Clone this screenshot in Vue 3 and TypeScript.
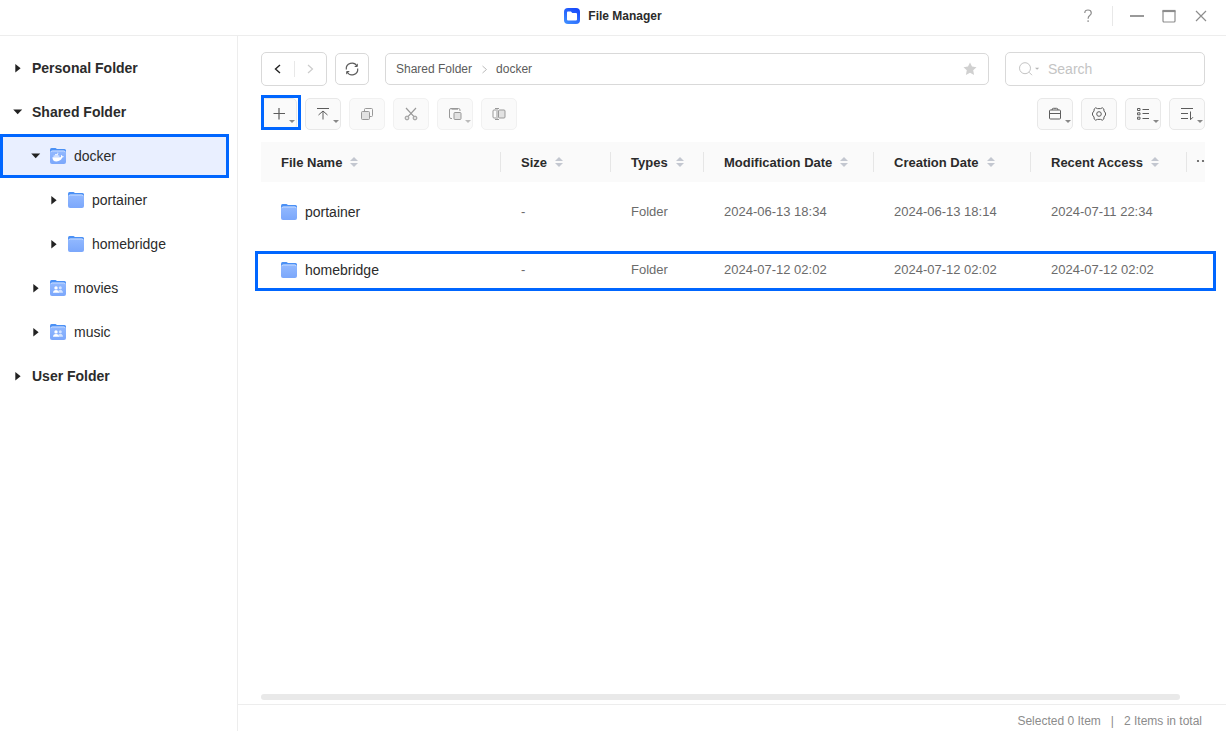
<script setup lang="ts">
import { ref } from 'vue'

type Glyph = 'plain' | 'docker' | 'people'

interface TreeNode {
  label: string
  level: 0 | 1 | 2
  open?: boolean
  icon?: Glyph
  selected?: boolean
}

interface Column {
  key: string
  label: string
}

interface FileRow {
  name: string
  size: string
  type: string
  modified: string
  created: string
  accessed: string
  marked?: boolean
}

const tree: TreeNode[] = [
  { label: 'Personal Folder', level: 0 },
  { label: 'Shared Folder', level: 0, open: true },
  { label: 'docker', level: 1, open: true, icon: 'docker', selected: true },
  { label: 'portainer', level: 2, icon: 'plain' },
  { label: 'homebridge', level: 2, icon: 'plain' },
  { label: 'movies', level: 1, icon: 'people' },
  { label: 'music', level: 1, icon: 'people' },
  { label: 'User Folder', level: 0 },
]

const columns: Column[] = [
  { key: 'name', label: 'File Name' },
  { key: 'size', label: 'Size' },
  { key: 'type', label: 'Types' },
  { key: 'modified', label: 'Modification Date' },
  { key: 'created', label: 'Creation Date' },
  { key: 'accessed', label: 'Recent Access' },
]

const files: FileRow[] = [
  {
    name: 'portainer',
    size: '-',
    type: 'Folder',
    modified: '2024-06-13 18:34',
    created: '2024-06-13 18:14',
    accessed: '2024-07-11 22:34',
  },
  {
    name: 'homebridge',
    size: '-',
    type: 'Folder',
    modified: '2024-07-12 02:02',
    created: '2024-07-12 02:02',
    accessed: '2024-07-12 02:02',
    marked: true,
  },
]

const query = ref('')
</script>

<template>
  <div class="window">
    <svg class="defs" aria-hidden="true">
      <defs>
        <linearGradient id="folder-front" x1="0" y1="0" x2="0" y2="1">
          <stop offset="0" stop-color="#92b9ff" />
          <stop offset="1" stop-color="#7ba7fb" />
        </linearGradient>
        <linearGradient id="app-bg" x1="0.8" y1="0" x2="0.2" y2="1">
          <stop offset="0" stop-color="#1546fb" />
          <stop offset="1" stop-color="#3f8dff" />
        </linearGradient>
      </defs>
      <symbol id="i-plain" viewBox="0 0 16 16">
        <path d="M0 2Q0 0 1.500 0H5.500L7 1H14.500Q16 1 16 2.500V8H0z" fill="#4a90f5" />
        <path d="M0 4.500Q0 2.500 2 2.500H14Q16 2.500 16 4.500V14Q16 16 14 16H2Q0 16 0 14z" fill="url(#folder-front)" />
        <path d="M1 4.200Q1.200 3 2.400 3H13.600Q14.800 3 15 4.200" fill="none" stroke="#cfe1ff" stroke-width="0.900" />
      </symbol>
      <symbol id="i-docker" viewBox="0 0 16 16">
        <use href="#i-plain" />
        <path d="M2.400 9.200H10.500Q11.400 8.800 10.900 7.400L11.500 7Q12.300 7.500 12.400 8.300Q13.300 8.100 14 8.600Q13.400 9.600 12.200 9.600Q10.900 13.400 6.500 13.400Q2.400 13.400 2.400 9.200z" fill="#fff" />
        <path d="M3.500 7.400h5.900v1.400H3.500zM5 6h3v1.200H5zM7 4.800h1.400v1H7z" fill="#e3edff" />
      </symbol>
      <symbol id="i-people" viewBox="0 0 16 16">
        <use href="#i-plain" />
        <g fill="#d3e3ff">
          <circle cx="10.300" cy="7.700" r="1.500" />
          <path d="M8.500 12.800V10.500Q10 9.300 11.500 9.900Q13 10.700 13 12.800z" />
        </g>
        <g fill="#fff">
          <circle cx="6" cy="7.900" r="1.700" />
          <path d="M3 12.800Q3 9.900 6 9.900T9 12.800z" />
        </g>
      </symbol>
    </svg>

    <header class="titlebar">
      <div class="app-title">
        <svg width="16" height="16" viewBox="0 0 16 16" aria-hidden="true">
          <rect width="16" height="16" rx="4" fill="url(#app-bg)" />
          <path d="M3 4.500Q3 3.600 3.900 3.600H6.900L8.300 5H12Q13 5 13 6V11.400Q13 12.400 12 12.400H4Q3 12.400 3 11.400z" fill="#fff" />
        </svg>
        <h1>File Manager</h1>
      </div>
      <div class="window-controls">
        <button type="button" class="bare" aria-label="Help">
          <svg width="16" height="16" viewBox="0 0 16 16" class="line grey thick">
            <path d="M4.800 5Q4.800 2 8 2T11.300 4.900Q11.300 6.300 9.700 7.400T8.100 10.700" />
            <path d="M8.100 12.300v1.700" />
          </svg>
        </button>
        <span class="bar"></span>
        <button type="button" class="bare" aria-label="Minimize">
          <svg width="16" height="16" viewBox="0 0 16 16"><path d="M1 8h14" fill="none" stroke="#999" stroke-width="2" /></svg>
        </button>
        <button type="button" class="bare" aria-label="Maximize">
          <svg width="16" height="16" viewBox="0 0 16 16" fill="none" stroke="#8d8d8d">
            <rect x="2" y="2.500" width="12" height="11.500" rx="1" stroke-width="1.200" /><path d="M1.500 3h13" stroke-width="2.200" />
          </svg>
        </button>
        <button type="button" class="bare" aria-label="Close">
          <svg width="16" height="16" viewBox="0 0 16 16" class="line grey thick"><path d="M3 3l10 10M13 3L3 13" /></svg>
        </button>
      </div>
    </header>

    <div class="body">
      <nav class="sidebar" aria-label="Folders">
        <ul>
          <li v-for="node in tree" :key="node.label">
            <button type="button" class="node" :class="['level-' + node.level, { selected: node.selected }]" :aria-expanded="!!node.open">
              <svg class="arrow" width="8" height="10" viewBox="0 0 8 10" aria-hidden="true">
                <path v-if="node.open" d="M-0.800 2.500h9L3.700 7.300z" />
                <path v-else d="M1.300 1v8.400L6.600 5.200z" />
              </svg>
              <svg v-if="node.icon" class="folder" width="16" height="16" aria-hidden="true"><use :href="'#i-' + node.icon" /></svg>
              <span>{{ node.label }}</span>
            </button>
          </li>
        </ul>
      </nav>

      <main class="main">
        <div class="content">
          <div class="location">
            <div class="history">
              <button type="button" aria-label="Back">
                <svg width="16" height="16" viewBox="0 0 16 16" fill="none" stroke="#222" stroke-width="1.400"><path d="M10 4L5.500 8L10 12" /></svg>
              </button>
              <span class="bar"></span>
              <button type="button" aria-label="Forward" disabled>
                <svg width="16" height="16" viewBox="0 0 16 16" fill="none" stroke="#ccc" stroke-width="1.200"><path d="M6 4L10.500 8L6 12" /></svg>
              </button>
            </div>
            <button type="button" class="refresh" aria-label="Refresh">
              <svg width="16" height="16" viewBox="0 0 16 16" class="line">
                <path d="M2.300 8.500A5.700 5.700 0 0 1 13 5.200M13.700 7.500A5.700 5.700 0 0 1 3 10.800" stroke-width="1.200" />
                <path d="M13.300 2.800V5.500H10.700M2.700 13.200V10.500H5.300" />
              </svg>
            </button>
            <div class="path">
              <a href="#shared">Shared Folder</a>
              <svg width="8" height="10" viewBox="0 0 8 10" fill="none" stroke="#bbb"><path d="M2.500 2L6.500 5.500L2.500 9" /></svg>
              <a href="#docker">docker</a>
              <button type="button" class="bare star" aria-label="Add to favorites">
                <svg width="16" height="16" viewBox="0 0 16 16"><path d="M8 1.500l2 4 4.500.7-3.300 3.100.9 4.600L8 11.700l-4.100 2.200.9-4.600-3.300-3.100L6 5.500z" fill="#d0d0d0" /></svg>
              </button>
            </div>
            <div class="search">
              <button type="button" class="bare" aria-label="Search options">
                <svg width="24" height="16" viewBox="0 0 24 16">
                  <g fill="none" stroke="#c4c4c4"><circle cx="7" cy="7.200" r="5.500" /><path d="M11 11.200l3 3" /></g>
                  <path d="M17 6.800h4.200l-2.100 2z" fill="#b5b5b5" />
                </svg>
              </button>
              <input v-model="query" type="text" placeholder="Search" aria-label="Search" />
            </div>
          </div>

          <div class="toolbar">
            <button type="button" class="tool callout" aria-label="New">
              <svg width="16" height="16" viewBox="0 0 16 16" class="line"><path d="M2.500 7.500h11.500M8 2v11.500" stroke-width="1.200" /></svg>
              <span class="caret"></span>
            </button>
            <button type="button" class="tool" aria-label="Upload">
              <svg width="16" height="16" viewBox="0 0 16 16" class="line"><path d="M2 2.500h12M8 13.500V5M3.500 9L8 5l4.500 4" /></svg>
              <span class="caret"></span>
            </button>
            <button type="button" class="tool off" aria-label="Copy" disabled>
              <svg width="16" height="16" viewBox="0 0 16 16" class="line">
                <rect x="2.500" y="5.500" width="8" height="8" rx="1" fill="#e2e2e2" /><path d="M5.500 5.500V3.500Q5.500 2.500 6.500 2.500H12.500Q13.500 2.500 13.500 3.500V9.500Q13.500 10.500 12.500 10.500H10.500" />
              </svg>
            </button>
            <button type="button" class="tool off" aria-label="Cut" disabled>
              <svg width="16" height="16" viewBox="0 0 16 16" class="line">
                <path d="M3 2L11 10.700M13 2L5 10.700" stroke-width="1.200" /><circle cx="4" cy="12" r="1.900" fill="#e2e2e2" /><circle cx="12" cy="12" r="1.900" fill="#e2e2e2" />
              </svg>
            </button>
            <button type="button" class="tool off" aria-label="Paste" disabled>
              <svg width="16" height="16" viewBox="0 0 16 16" class="line">
                <path d="M5 12.500H4Q2.500 12.500 2.500 11V4Q2.500 2.500 4 2.500H11.500Q13 2.500 13 4V5M4.500 3.200h6.500" /><rect x="7" y="6.500" width="7" height="7" rx="1" fill="#e2e2e2" />
              </svg>
              <span class="caret"></span>
            </button>
            <button type="button" class="tool off" aria-label="Rename" disabled>
              <svg width="16" height="16" viewBox="0 0 16 16" class="line">
                <rect x="7.500" y="4" width="6.500" height="8" rx="1" fill="#e2e2e2" /><path d="M5 4H3Q2 4 2 5V11Q2 12 3 12H5M4 2.500H8M4 13.500H8M6 2.500V13.500" />
              </svg>
            </button>
            <span class="spacer"></span>
            <button type="button" class="tool" aria-label="Tools">
              <svg width="16" height="16" viewBox="0 0 16 16" class="line"><rect x="2.500" y="4" width="11" height="9" rx="1" /><path d="M2.500 7.500h11M5 4Q5 2.300 6.500 2.300H9.500Q11 2.300 11 4" /></svg>
              <span class="caret"></span>
            </button>
            <button type="button" class="tool" aria-label="Settings">
              <svg width="16" height="16" viewBox="0 0 16 16" class="line">
                <path d="M4.600 1.800L6.500 2.600H9.500L11.400 1.800L12.800 3L13 5L14.500 7V9L13 11L12.800 13L11.400 14.200L9.500 13.400H6.500L4.600 14.200L3.200 13L3 11L1.500 9V7L3 5L3.200 3z" stroke-linejoin="round" /><circle cx="8" cy="8" r="2.300" />
              </svg>
            </button>
            <button type="button" class="tool" aria-label="View mode">
              <svg width="16" height="16" viewBox="0 0 16 16" class="line">
                <path d="M2.500 2.500h2.500v2h-2.500zM2.500 6.800h2.500v2h-2.500zM2.500 11.200h2.500v2h-2.500zM7.500 3.500h6.500M7.500 7.500h6.500M7.500 12.500h6.500" />
              </svg>
              <span class="caret"></span>
            </button>
            <button type="button" class="tool" aria-label="Sort order">
              <svg width="16" height="16" viewBox="0 0 16 16" class="line"><path d="M2 2.500h12M2 7.500h7M2 12.500h7M11.500 5.500v8.200l2.500-2.500" /></svg>
              <span class="caret"></span>
            </button>
          </div>

          <table class="files">
            <colgroup>
              <col />
              <col class="c-size" />
              <col class="c-type" />
              <col class="c-modified" />
              <col class="c-created" />
              <col class="c-accessed" />
              <col class="c-more" />
            </colgroup>
            <thead>
              <tr>
                <th v-for="col in columns" :key="col.key" scope="col">
                  <div class="head">
                    <span>{{ col.label }}</span>
                    <svg width="8" height="10" viewBox="0 0 8 10" aria-hidden="true"><path d="M0 4h8L4 0zM0 6h8L4 10z" fill="#c3c7d0" /></svg>
                  </div>
                </th>
                <th scope="col" class="more">
                  <button type="button" class="bare" aria-label="More columns">
                    <svg width="16" height="16" viewBox="0 0 16 16" fill="#555"><circle cx="3" cy="8" r="1.100" /><circle cx="8" cy="8" r="1.100" /><circle cx="13" cy="8" r="1.100" /></svg>
                  </button>
                </th>
              </tr>
            </thead>
            <tbody>
              <tr v-for="file in files" :key="file.name">
                <td>
                  <div class="name">
                    <svg width="16" height="16" aria-hidden="true"><use href="#i-plain" /></svg>
                    <span>{{ file.name }}</span>
                  </div>
                  <span v-if="file.marked" class="mark"></span>
                </td>
                <td>{{ file.size }}</td>
                <td>{{ file.type }}</td>
                <td>{{ file.modified }}</td>
                <td>{{ file.created }}</td>
                <td>{{ file.accessed }}</td>
                <td></td>
              </tr>
            </tbody>
          </table>

          <div class="scroll-track"><div class="scroll-thumb"></div></div>
        </div>

        <footer class="status">
          <span>Selected 0 Item</span>
          <span class="pipe">|</span>
          <span>2 Items in total</span>
        </footer>
      </main>
    </div>
  </div>
</template>

<style>
body {
  margin: 0;
}
</style>

<style scoped>
.window {
  display: flex;
  flex-direction: column;
  min-height: 100vh;
  background: #fff;
  color: #2b2b2b;
  font-family: "Liberation Sans", Arial, sans-serif;
  font-size: 14px;
}
.window *,
.window *::after {
  box-sizing: border-box;
}
.defs {
  position: absolute;
  width: 0;
  height: 0;
}
svg {
  display: block;
  flex: none;
}
button {
  margin: 0;
  padding: 0;
  font: inherit;
  color: inherit;
}
.bare {
  border: 0;
  background: none;
}
.line {
  fill: none;
  stroke: #5c5c5c;
}
.line.grey {
  stroke: #8d8d8d;
}
.line.thick {
  stroke-width: 1.2;
}
.bar {
  width: 1px;
  height: 20px;
  background: #e8e8e8;
}
.titlebar {
  display: grid;
  grid-template-columns: 1fr auto 1fr;
  align-items: center;
  height: 36px;
  padding-bottom: 4px;
  border-bottom: 1px solid #ededed;
}
.app-title {
  grid-column: 2;
  display: flex;
  align-items: center;
  gap: 8px;
}
h1 {
  margin: 0;
  font-size: 12px;
  line-height: 16px;
}
.window-controls {
  display: flex;
  justify-content: flex-end;
  align-items: center;
  gap: 16px;
  padding-right: 17px;
}
.body {
  display: flex;
  flex: 1;
}
.sidebar {
  flex: none;
  width: 238px;
  padding: 10px 8px 0 0;
  border-right: 1px solid #ededed;
}
ul {
  margin: 0;
  padding: 0;
  list-style: none;
}
.node {
  display: flex;
  align-items: center;
  width: 100%;
  height: 44px;
  padding-left: 14px;
  border: 0;
  background: none;
}
.level-0 {
  font-weight: bold;
}
.level-1 {
  padding-left: 32px;
}
.level-2 {
  padding-left: 50px;
}
.node.selected {
  padding-left: 29px;
  border: 3px solid #0066ff;
  background: #e9efff;
}
.arrow {
  margin-right: 10px;
  overflow: visible;
  fill: #222;
}
.folder {
  margin-right: 8px;
}
.main {
  display: flex;
  flex: 1;
  flex-direction: column;
  min-width: 0;
}
.content {
  display: flex;
  flex: 1;
  flex-direction: column;
  padding: 16px 21px 4px 23px;
}
.location {
  display: flex;
  align-items: center;
  height: 34px;
}
.history,
.refresh,
.path,
.search {
  display: flex;
  align-items: center;
  border: 1px solid #d9d9d9;
  border-radius: 5px;
  background: #fff;
}
.history {
  width: 66px;
  height: 34px;
}
.history .bar {
  height: 16px;
}
.history button {
  display: flex;
  flex: 1;
  align-items: center;
  justify-content: center;
  border: 0;
  background: none;
}
.refresh {
  justify-content: center;
  width: 34px;
  height: 32px;
  margin-left: 8px;
}
.path {
  flex: 1;
  gap: 8px;
  height: 32px;
  margin: 0 16px;
  padding: 0 10px;
  font-size: 12px;
}
.path a {
  color: #5c5c5c;
  text-decoration: none;
}
.star {
  margin-left: auto;
}
.search {
  width: 200px;
  height: 34px;
  padding: 0 12px;
}
.search input {
  flex: 1;
  min-width: 0;
  margin-left: 6px;
  padding: 0;
  border: 0;
  outline: 0;
  background: none;
  font: inherit;
}
.search input::placeholder {
  color: #c4c4c4;
}
.toolbar {
  display: flex;
  gap: 8px;
  margin: 12px 0;
}
.tool {
  position: relative;
  display: flex;
  align-items: center;
  justify-content: center;
  width: 36px;
  height: 32px;
  border: 1px solid #e8e8e8;
  border-radius: 5px;
  background: #fafafa;
}
.tool.off {
  border-color: #f1f1f1;
}
.tool.off .line {
  stroke: #999;
}
.caret {
  position: absolute;
  right: 1px;
  bottom: 6px;
  border: 3px solid transparent;
  border-top-color: #888;
  border-bottom: 0;
}
.off .caret {
  border-top-color: #bbb;
}
.callout::after {
  content: "";
  position: absolute;
  inset: -4px -5px -1px -1px;
  border: 3px solid #0066ff;
}
.spacer {
  flex: 1;
}
.files {
  width: 100%;
  table-layout: fixed;
  border-collapse: collapse;
  font-size: 13px;
}
.c-size {
  width: 110px;
}
.c-type {
  width: 93px;
}
.c-modified {
  width: 170px;
}
.c-created {
  width: 157px;
}
.c-accessed {
  width: 156px;
}
.c-more {
  width: 18px;
}
th,
td {
  padding: 0 0 0 20px;
  text-align: left;
  white-space: nowrap;
}
th {
  height: 40px;
  background: #fafafa;
}
.head {
  display: flex;
  align-items: center;
  gap: 8px;
  height: 20px;
  border-right: 1px solid #e6e6e6;
}
th.more {
  padding-left: 8px;
  overflow: hidden;
}
tbody tr {
  position: relative;
}
td {
  height: 58px;
  color: #6b6b6b;
}
.name {
  display: flex;
  align-items: center;
  gap: 8px;
  padding-top: 2px;
  color: #2b2b2b;
  font-size: 14px;
}
.mark {
  position: absolute;
  inset: 11px -11px 7px -6px;
  border: 3px solid #0066ff;
}
.scroll-track {
  margin-top: auto;
  padding-right: 25px;
}
.scroll-thumb {
  height: 6px;
  border-radius: 3px;
  background: #e9e9e9;
}
.status {
  display: flex;
  align-items: center;
  justify-content: flex-end;
  gap: 10px;
  height: 27px;
  padding: 6px 24px 0 0;
  border-top: 1px solid #ededed;
  color: #8c8c8c;
  font-size: 12px;
}
</style>
